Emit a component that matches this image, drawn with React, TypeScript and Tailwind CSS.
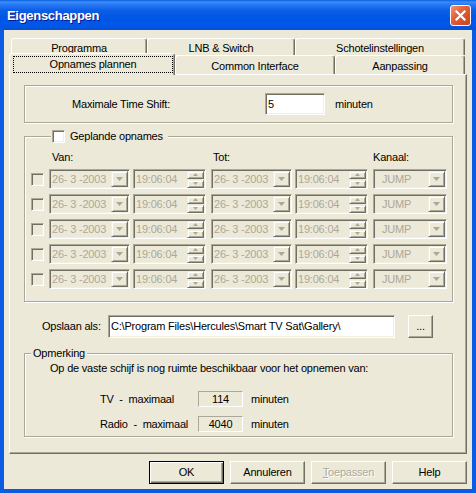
import React from "react";

const sunken =
  "border border-t-[#aca899] border-l-[#aca899] border-r-white border-b-white shadow-[inset_1px_1px_0_#716f64,inset_-1px_-1px_0_#f1efe2]";
const raised =
  "border border-t-[#f1efe2] border-l-[#f1efe2] border-r-[#716f64] border-b-[#716f64] shadow-[inset_1px_1px_0_#fff,inset_-1px_-1px_0_#aca899]";
const etched = "border border-[#aca899] shadow-[inset_1px_1px_0_#fff,1px_1px_0_#fff]";

function DownArrow({ color = "#aca899" }: { color?: string }) {
  return (
    <svg width="7" height="4" viewBox="0 0 7 4">
      <polygon points="0,0 7,0 3.5,4" fill={color} />
    </svg>
  );
}

function DropButton() {
  return (
    <div className={`${raised} w-[17px] h-[16px] bg-[#ece9d8] flex items-center justify-center`}>
      <DownArrow />
    </div>
  );
}

function Spin() {
  return (
    <div className="flex flex-col gap-[1px] w-[17px] mr-[1px]">
      <div className={`${raised} h-[8px] bg-[#ece9d8] flex items-center justify-center`}>
        <svg width="5" height="3" viewBox="0 0 5 3">
          <polygon points="0,3 5,3 2.5,0" fill="#aca899" />
        </svg>
      </div>
      <div className={`${raised} h-[8px] bg-[#ece9d8] flex items-center justify-center`}>
        <svg width="5" height="3" viewBox="0 0 5 3">
          <polygon points="0,0 5,0 2.5,3" fill="#aca899" />
        </svg>
      </div>
    </div>
  );
}

function DateBox({ className = "" }: { className?: string }) {
  return (
    <div className={`${sunken} ${className} w-[81px] h-[20px] flex items-center justify-between pl-[2px] pr-[1px] text-[#aca899]`}>
      <span className="whitespace-pre">26- 3 -2003</span>
      <DropButton />
    </div>
  );
}

function TimeBox({ className = "" }: { className?: string }) {
  return (
    <div className={`${sunken} ${className} w-[73px] h-[20px] flex items-center justify-between pl-[2px] text-[#aca899]`}>
      <span>19:06:04</span>
      <Spin />
    </div>
  );
}

function ChannelBox({ className = "" }: { className?: string }) {
  return (
    <div className={`${sunken} ${className} w-[74px] h-[20px] flex items-center justify-between pl-[8px] pr-[1px] text-[#aca899]`}>
      <span>JUMP</span>
      <DropButton />
    </div>
  );
}

function RecRow() {
  return (
    <div className="flex items-center h-[20px]">
      <div className={`${sunken} w-[13px] h-[13px] bg-[#ece9d8]`} />
      <DateBox className="ml-[5px]" />
      <TimeBox className="ml-[3px]" />
      <DateBox className="ml-[5px]" />
      <TimeBox className="ml-[3px]" />
      <ChannelBox className="ml-[5px]" />
    </div>
  );
}

function Tab({ label, w, h, pt }: { label: string; w: string; h: string; pt: string }) {
  return (
    <div
      className={`${w} ${h} ${pt} flex justify-center rounded-t-[3px] border-t border-l border-r border-t-white border-l-white border-r-[#716f64] shadow-[inset_-1px_0_0_#aca899] bg-[#ece9d8]`}
    >
      {label}
    </div>
  );
}

function PushButton({ children, isDefault = false }: { children: React.ReactNode; isDefault?: boolean }) {
  const cls = isDefault
    ? "border border-black shadow-[inset_1px_1px_0_#fff,inset_-1px_-1px_0_#716f64,inset_-2px_-2px_0_#aca899]"
    : "border border-t-white border-l-white border-r-[#716f64] border-b-[#716f64] shadow-[inset_-1px_-1px_0_#aca899]";
  return (
    <div className={`${cls} w-[75px] h-[23px] flex items-center justify-center bg-[#ece9d8]`}>
      {children}
    </div>
  );
}

export default function App() {
  return (
    <div className="w-[476px] h-[493px] flex flex-col bg-[#0b5be3] font-['Liberation_Sans',Arial,sans-serif] text-[11px] leading-[13px] tracking-[-0.2px] text-black">
      {/* Title bar */}
      <div className="h-[30px] flex items-center justify-between pl-[7px] pr-[5px] bg-[linear-gradient(to_bottom,#0a5fe0_0%,#3d8ffb_7%,#2a7af5_14%,#0b5fe6_35%,#0055e5_60%,#0058ea_85%,#0a4fd0_100%)]">
        <span className="pt-[1px] text-white font-bold text-[13px] tracking-[-0.3px] [text-shadow:1px_1px_0_#0a1a8a]">
          Eigenschappen
        </span>
        <div className="w-[21px] h-[21px] rounded-[3px] border border-white bg-[linear-gradient(135deg,#f09478_0%,#e2603a_40%,#c9421a_100%)] flex items-center justify-center">
          <svg width="11" height="11" viewBox="0 0 11 11">
            <path d="M1.5 1.5 L9.5 9.5 M9.5 1.5 L1.5 9.5" stroke="#fff" strokeWidth="2.2" strokeLinecap="square" />
          </svg>
        </div>
      </div>

      {/* Body */}
      <div className="flex-1 mx-[4px] mb-[4px] bg-[#ece9d8] flex flex-col pt-[8px]">
        {/* Tabs row 1 */}
        <div className="flex pl-[7px] h-[17px]">
          <Tab label="Programma" w="w-[136px]" h="h-[17px]" pt="pt-[3px]" />
          <Tab label="LNB & Switch" w="w-[148px]" h="h-[17px]" pt="pt-[3px]" />
          <Tab label="Schotelinstellingen" w="w-[170px]" h="h-[17px]" pt="pt-[3px]" />
        </div>
        {/* Tabs row 2 */}
        <div className="flex items-start pl-[5px] h-[19px]">
          <div className="relative z-10 -mt-[2px] -mb-[1px] w-[166px] h-[22px] rounded-t-[3px] bg-[#ece9d8] border-t border-l border-r border-t-white border-l-white border-r-[#716f64] shadow-[inset_-1px_0_0_#aca899] pl-[3px] pr-[1px] pt-[2px]">
            <div className="h-[17px] border border-dotted border-black flex items-center justify-center">
              Opnames plannen
            </div>
          </div>
          <Tab label="Common Interface" w="w-[160px]" h="h-[19px]" pt="pt-[4px]" />
          <Tab label="Aanpassing" w="w-[130px]" h="h-[19px]" pt="pt-[4px]" />
        </div>

        {/* Panel */}
        <div className="mx-[5px] h-[380px] flex flex-col pl-[14px] pr-[13px] border border-t-white border-l-white border-r-[#716f64] border-b-[#716f64] shadow-[inset_-1px_-1px_0_#aca899]">
          {/* Time shift group */}
          <div className={`${etched} mt-[10px] h-[38px] flex items-center pl-[47px]`}>
            <span className="w-[193px]">Maximale Time Shift:</span>
            <div className={`${sunken} w-[60px] h-[22px] bg-white flex items-center pl-[2px]`}>5</div>
            <span className="ml-[10px]">minuten</span>
          </div>

          {/* Geplande opnames */}
          <fieldset className={`${etched} mt-[6px] pl-[6px] pt-[8px] pb-[12px]`}>
            <legend className="ml-[20px] px-[1px] pr-[5px] h-[14px] flex items-center bg-[#ece9d8]">
              <span className={`${sunken} w-[13px] h-[13px] bg-white`} />
              <span className="ml-[5px]">Geplande opnames</span>
            </legend>
            <div className="flex h-[13px] pl-[21px]">
              <span className="w-[161px]">Van:</span>
              <span className="w-[160px]">Tot:</span>
              <span>Kanaal:</span>
            </div>
            <div className="flex flex-col gap-[5px] mt-[5px]">
              <RecRow />
              <RecRow />
              <RecRow />
              <RecRow />
              <RecRow />
            </div>
          </fieldset>

          {/* Opslaan als */}
          <div className="flex items-center mt-[13px] h-[23px] pl-[18px]">
            <span className="w-[66px]">Opslaan als:</span>
            <div className={`${sunken} w-[287px] h-[23px] bg-white flex items-center pl-[2px]`}>
              C:\Program Files\Hercules\Smart TV Sat\Gallery\
            </div>
            <div className="ml-[13px] w-[25px] h-[23px] flex items-center justify-center border border-t-white border-l-white border-r-[#716f64] border-b-[#716f64] shadow-[inset_-1px_-1px_0_#aca899]">
              ...
            </div>
          </div>

          {/* Opmerking */}
          <fieldset className={`${etched} mt-[9px] pt-[2px] pb-[4px]`}>
            <legend className="ml-[6px] px-[2px] h-[13px] bg-[#ece9d8]">Opmerking</legend>
            <div className="pl-[25px] h-[13px]">
              Op de vaste schijf is nog ruimte beschikbaar voor het opnemen van:
            </div>
            <div className="flex items-center h-[16px] mt-[16px] pl-[75px]">
              <span className="w-[98px] whitespace-pre">TV  -  maximaal</span>
              <div className="w-[45px] h-[16px] border border-t-[#aca899] border-l-[#aca899] border-r-white border-b-white flex items-center justify-center">
                114
              </div>
              <span className="ml-[8px]">minuten</span>
            </div>
            <div className="flex items-center h-[16px] mt-[9px] pl-[75px]">
              <span className="w-[98px] whitespace-pre">Radio  -  maximaal</span>
              <div className="w-[45px] h-[16px] border border-t-[#aca899] border-l-[#aca899] border-r-white border-b-white flex items-center justify-center">
                4040
              </div>
              <span className="ml-[8px]">minuten</span>
            </div>
          </fieldset>
        </div>

        {/* Buttons */}
        <div className="flex justify-end gap-[6px] mt-[7px] pr-[5px]">
          <PushButton isDefault>OK</PushButton>
          <PushButton>Annuleren</PushButton>
          <PushButton>
            <span className="text-[#aca899] [text-shadow:1px_1px_0_#fff]">
              <span className="underline">T</span>oepassen
            </span>
          </PushButton>
          <PushButton>Help</PushButton>
        </div>
      </div>
    </div>
  );
}
